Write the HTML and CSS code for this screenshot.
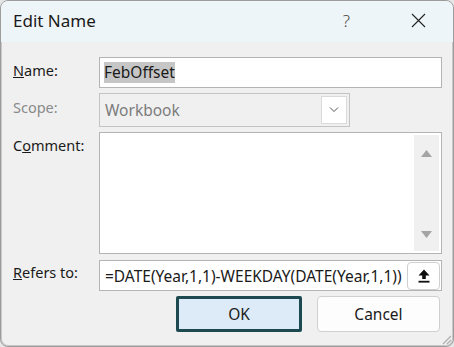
FILE: index.html
```html
<!DOCTYPE html>
<html lang="en">
<head>
  <meta charset="UTF-8" />
  <title>Edit Name</title>
  <link rel="stylesheet" href="styles.css">
</head>
<body>
  <div class="window">
    <div class="titlebar">
      <span class="title">Edit Name</span>
      <span class="help">?</span>
      <span class="close">
        <svg width="15" height="15" viewBox="0 0 15 15"><path d="M1 1 L14 14 M14 1 L1 14" stroke="#222" stroke-width="1.1" fill="none"/></svg>
      </span>
    </div>

    <div class="form">
      <label class="label"><u>N</u>ame:</label>
      <div class="field name-field"><span class="selected">FebOffset</span></div>

      <label class="label disabled">Scope:</label>
      <div class="combo">
        <span class="combo-text">Workbook</span>
        <span class="combo-btn">
          <svg width="10" height="6" viewBox="0 0 10 6"><path d="M1 0.5 L5 4.5 L9 0.5" stroke="#555" stroke-width="1" fill="none"/></svg>
        </span>
      </div>

      <label class="label">C<u>o</u>mment:</label>
      <div class="field comment">
        <div class="scrollbar">
          <svg width="11" height="7" viewBox="0 0 11 7"><path d="M0 7 L5.5 0 L11 7 Z" fill="#a4a4a4"/></svg>
          <svg width="11" height="7" viewBox="0 0 11 7"><path d="M0 0 L11 0 L5.5 7 Z" fill="#a4a4a4"/></svg>
        </div>
      </div>

      <label class="label"><u>R</u>efers to:</label>
      <div class="field refers">
        <span class="formula">=DATE(Year,1,1)-WEEKDAY(DATE(Year,1,1))</span>
        <span class="ref-btn">
          <svg width="12" height="14" viewBox="0 0 12 14"><path d="M6 0.5 L11.5 6.5 L7.8 6.5 L7.8 10 L4.2 10 L4.2 6.5 L0.5 6.5 Z" fill="#111"/><rect x="0.5" y="11.8" width="11" height="1.8" fill="#111"/></svg>
        </span>
      </div>
    </div>

    <div class="buttons">
      <button class="btn primary">OK</button>
      <button class="btn">Cancel</button>
    </div>

    <svg class="grip" width="12" height="12" viewBox="0 0 12 12"><path d="M11 3 L3 11 M11 7 L7 11" stroke="#b0b0b0" stroke-width="1.2"/></svg>
  </div>
</body>
</html>
```

FILE: styles.css
```css
body {
  margin: 0;
  background: #e6e6e6;
  font-family: "Noto Sans", "Open Sans", sans-serif;
  color: #1a1a1a;
}
.window {
  position: relative;
  box-sizing: border-box;
  width: 454px;
  height: 347px;
  background: #f0f0f0;
  border: 1px solid #9c9c9c;
  border-radius: 8px;
  overflow: hidden;
  box-shadow: inset 0 0 0 1px #c8c8c8;
}
.titlebar {
  display: flex;
  align-items: center;
  height: 41px;
  padding: 0 0 0 12px;
  background: #eef5f8;
}
.title {
  flex: 1;
  font-size: 17px;
  margin-top: -2px;
}
.help {
  font-size: 17px;
  font-weight: 300;
  color: #444;
  margin-right: 61px;
  margin-top: -2px;
}
.close {
  display: flex;
  margin-right: 27px;
  margin-top: -2px;
}
.form {
  display: grid;
  grid-template-columns: 86px 343px;
  grid-template-rows: 31px 34px 122px 32px;
  row-gap: 5px;
  padding: 15px 0 0 12px;
}
.form .refers {
  margin-top: 1px;
}
.label {
  font-size: 14.5px;
  padding-top: 3px;
}
.label.disabled {
  color: #8a8a8a;
  padding-top: 4px;
}
.field {
  box-sizing: border-box;
  background: #fff;
  border: 1px solid #b4b4b4;
}
.name-field {
  display: flex;
  align-items: center;
  padding-left: 4px;
  font-size: 15.5px;
}
.selected {
  background: #c6c6c6;
  line-height: 21px;
}
.combo {
  box-sizing: border-box;
  width: 251px;
  display: flex;
  align-items: center;
  border: 1px solid #c4c4c4;
  background: #f0f0f0;
  padding: 2px;
}
.combo-text {
  flex: 1;
  color: #7c7c7c;
  font-size: 15.5px;
  padding-left: 3px;
}
.combo-btn {
  box-sizing: border-box;
  width: 26px;
  height: 28px;
  display: flex;
  align-items: center;
  justify-content: center;
  background: #fff;
  border: 1px solid #dadada;
}
.comment {
  display: flex;
  justify-content: flex-end;
  padding: 2px;
}
.scrollbar {
  width: 25px;
  background: #f0f0f0;
  display: flex;
  flex-direction: column;
  justify-content: space-between;
  align-items: center;
  padding: 15px 0 13px;
}
.refers {
  display: flex;
  align-items: center;
  padding: 1px;
  overflow: hidden;
}
.formula {
  flex: 1;
  overflow: hidden;
  white-space: nowrap;
  font-size: 15.5px;
  padding-left: 4px;
}
.ref-btn {
  box-sizing: border-box;
  width: 33px;
  height: 28px;
  display: flex;
  align-items: center;
  justify-content: center;
  background: #fff;
  border: 1px solid #cfcfcf;
  border-radius: 4px;
}
.buttons {
  display: flex;
  justify-content: flex-end;
  gap: 15px;
  padding: 5px 13px 0 0;
}
.btn {
  box-sizing: border-box;
  width: 123px;
  height: 36px;
  font-family: inherit;
  font-size: 15.5px;
  color: #1a1a1a;
  background: #fdfdfd;
  border: 1px solid #d0d0d0;
  border-radius: 4px;
}
.btn.primary {
  width: 126px;
  background: #dcebf7;
  border: 3px solid #1c4a50;
  border-radius: 2px;
}
.grip {
  position: absolute;
  right: 1px;
  bottom: 1px;
}
```
